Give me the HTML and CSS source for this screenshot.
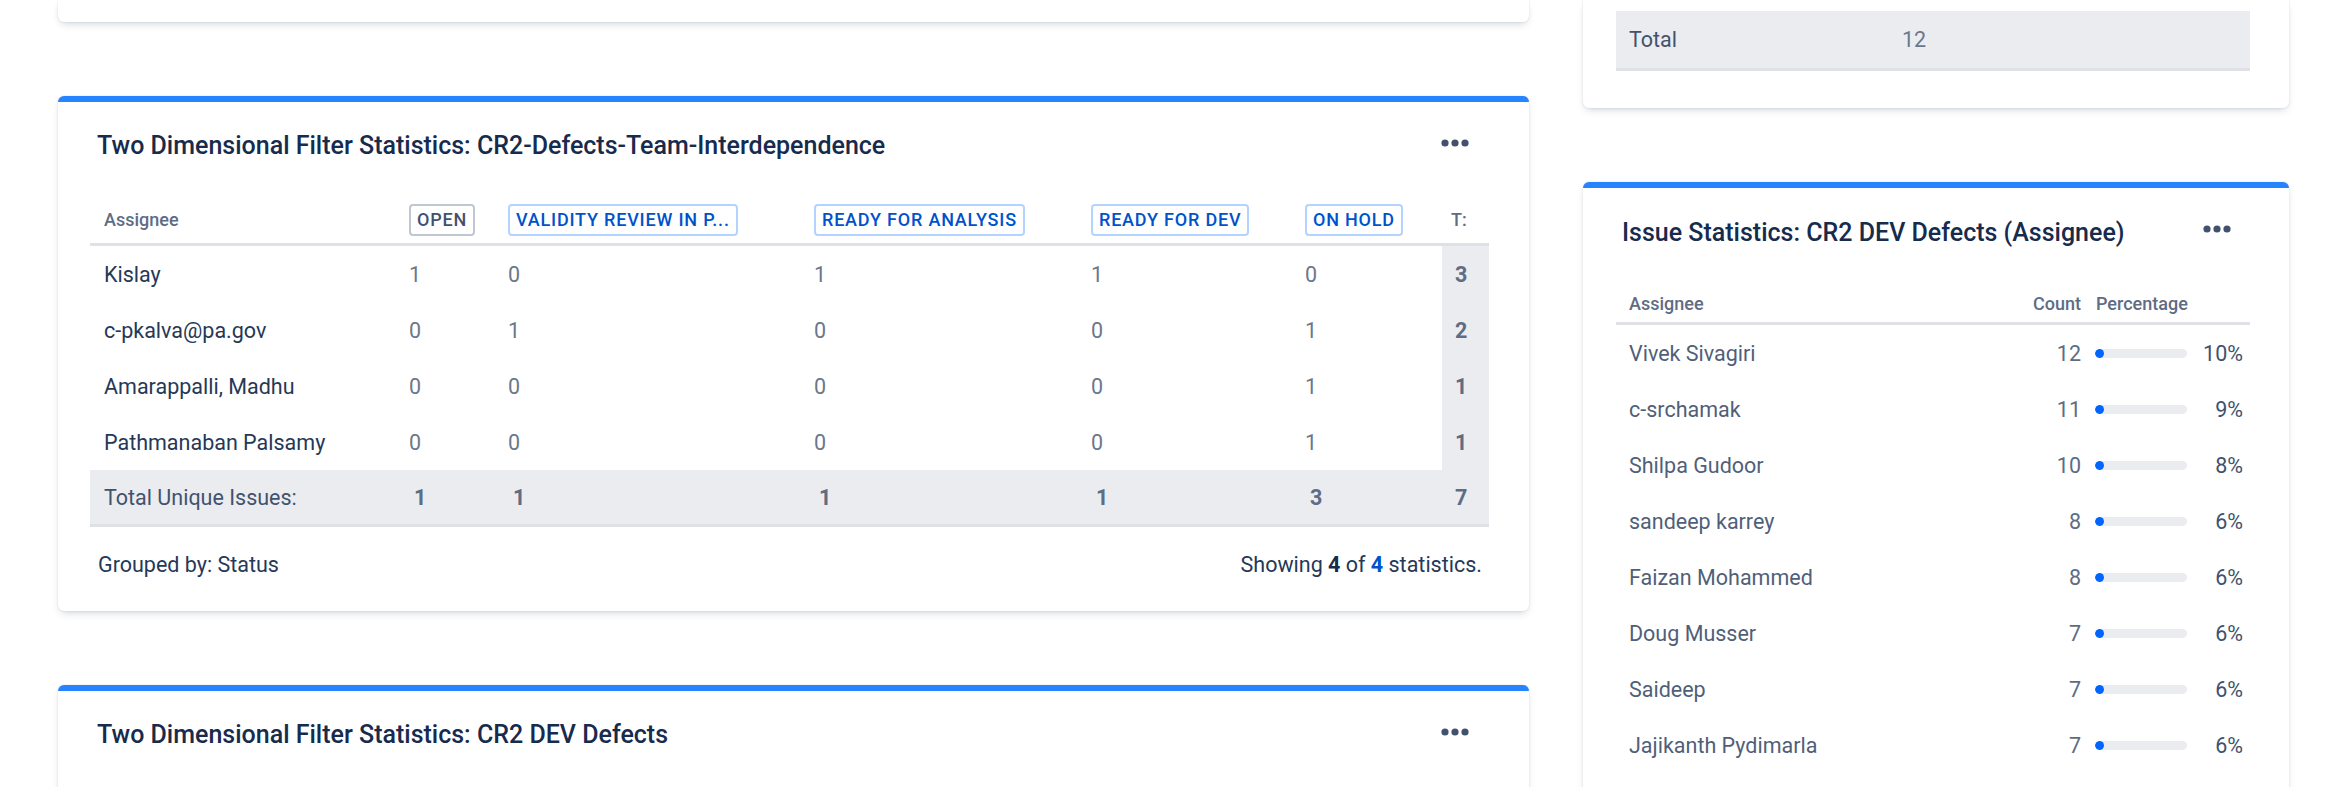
FILE: index.html
```html
<!DOCTYPE html>
<html lang="en">
<head>
<meta charset="utf-8">
<title>Dashboard</title>
<link rel="stylesheet" href="styles.css">
</head>
<body>
<div class="page">
  <div class="col col-left">
    <div class="card stub-left"></div>

    <section class="card gadget">
      <div class="gadget-head">
        <h2 class="gadget-title">Two Dimensional Filter Statistics: CR2-Defects-Team-Interdependence</h2>
        <span class="more"><svg width="28" height="8" viewBox="0 0 28 8"><circle cx="4" cy="4" r="3.6"/><circle cx="14" cy="4" r="3.6"/><circle cx="24" cy="4" r="3.6"/></svg></span>
      </div>
      <table class="two-d">
        <colgroup>
          <col class="c-name"><col class="c-open"><col class="c-valid"><col class="c-anal"><col class="c-dev"><col class="c-hold"><col class="c-tot">
        </colgroup>
        <thead>
          <tr>
            <th class="name">Assignee</th>
            <th><span class="loz loz-grey">OPEN</span></th>
            <th><span class="loz loz-blue">VALIDITY REVIEW IN P...</span></th>
            <th><span class="loz loz-blue">READY FOR ANALYSIS</span></th>
            <th><span class="loz loz-blue">READY FOR DEV</span></th>
            <th><span class="loz loz-blue">ON HOLD</span></th>
            <th class="tot-h">T:</th>
          </tr>
        </thead>
        <tbody>
          <tr><td class="name">Kislay</td><td>1</td><td>0</td><td>1</td><td>1</td><td>0</td><td class="tot">3</td></tr>
          <tr><td class="name">c-pkalva@pa.gov</td><td>0</td><td>1</td><td>0</td><td>0</td><td>1</td><td class="tot">2</td></tr>
          <tr><td class="name">Amarappalli, Madhu</td><td>0</td><td>0</td><td>0</td><td>0</td><td>1</td><td class="tot">1</td></tr>
          <tr><td class="name">Pathmanaban Palsamy</td><td>0</td><td>0</td><td>0</td><td>0</td><td>1</td><td class="tot">1</td></tr>
          <tr class="total-row"><td class="name">Total Unique Issues:</td><td>1</td><td>1</td><td>1</td><td>1</td><td>3</td><td class="tot">7</td></tr>
        </tbody>
      </table>
      <div class="gadget-foot">
        <span>Grouped by: Status</span>
        <span>Showing <b>4</b> of <b class="link">4</b> statistics.</span>
      </div>
    </section>

    <section class="card gadget gadget-tall">
      <div class="gadget-head">
        <h2 class="gadget-title">Two Dimensional Filter Statistics: CR2 DEV Defects</h2>
        <span class="more"><svg width="28" height="8" viewBox="0 0 28 8"><circle cx="4" cy="4" r="3.6"/><circle cx="14" cy="4" r="3.6"/><circle cx="24" cy="4" r="3.6"/></svg></span>
      </div>
    </section>
  </div>

  <div class="col col-right">
    <div class="card stub-right">
      <div class="total-line"><span class="tl-label">Total</span><span class="tl-val">12</span></div>
    </div>

    <section class="card gadget gadget-right">
      <div class="gadget-head">
        <h2 class="gadget-title">Issue Statistics: CR2 DEV Defects (Assignee)</h2>
        <span class="more"><svg width="28" height="8" viewBox="0 0 28 8"><circle cx="4" cy="4" r="3.6"/><circle cx="14" cy="4" r="3.6"/><circle cx="24" cy="4" r="3.6"/></svg></span>
      </div>
      <table class="stats">
        <colgroup><col class="s-name"><col class="s-count"><col class="s-pct"></colgroup>
        <thead>
          <tr><th class="name">Assignee</th><th class="count">Count</th><th class="pct-h">Percentage</th></tr>
        </thead>
        <tbody>
          <tr><td class="name">Vivek Sivagiri</td><td class="count">12</td><td><div class="pct"><span class="bar"><span class="fill" style="width:10%"></span></span><span class="pv">10%</span></div></td></tr>
          <tr><td class="name">c-srchamak</td><td class="count">11</td><td><div class="pct"><span class="bar"><span class="fill" style="width:9%"></span></span><span class="pv">9%</span></div></td></tr>
          <tr><td class="name">Shilpa Gudoor</td><td class="count">10</td><td><div class="pct"><span class="bar"><span class="fill" style="width:8%"></span></span><span class="pv">8%</span></div></td></tr>
          <tr><td class="name">sandeep karrey</td><td class="count">8</td><td><div class="pct"><span class="bar"><span class="fill" style="width:6%"></span></span><span class="pv">6%</span></div></td></tr>
          <tr><td class="name">Faizan Mohammed</td><td class="count">8</td><td><div class="pct"><span class="bar"><span class="fill" style="width:6%"></span></span><span class="pv">6%</span></div></td></tr>
          <tr><td class="name">Doug Musser</td><td class="count">7</td><td><div class="pct"><span class="bar"><span class="fill" style="width:6%"></span></span><span class="pv">6%</span></div></td></tr>
          <tr><td class="name">Saideep</td><td class="count">7</td><td><div class="pct"><span class="bar"><span class="fill" style="width:6%"></span></span><span class="pv">6%</span></div></td></tr>
          <tr><td class="name">Jajikanth Pydimarla</td><td class="count">7</td><td><div class="pct"><span class="bar"><span class="fill" style="width:6%"></span></span><span class="pv">6%</span></div></td></tr>
        </tbody>
      </table>
    </section>
  </div>
</div>
</body>
</html>
```

FILE: styles.css
```css
html, body {
  margin: 0;
  padding: 0;
  background: #ffffff;
  height: 787px;
  overflow: hidden;
}
body {
  font-family: Roboto, "Noto Sans", "Liberation Sans", sans-serif;
  color: #172b4d;
  font-size: 21.5px;
}
.page {
  display: flex;
  gap: 54px;
  padding-left: 58px;
}
.col {
  display: flex;
  flex-direction: column;
  gap: 74px;
}
.col-left { width: 1471px; }
.col-right { width: 706px; }

.card {
  background: #fff;
  border-radius: 6px;
  box-shadow: 0 4px 9px -3px rgba(9, 30, 66, 0.22), 0 0 2px rgba(9, 30, 66, 0.14);
}
.stub-left {
  height: 22px;
  border-radius: 0 0 6px 6px;
}
.stub-right {
  border-radius: 0 0 6px 6px;
  padding: 11px 39px 37px 33px;
}
.total-line {
  display: flex;
  align-items: center;
  height: 57px;
  background: #ebecf0;
  border-bottom: 3px solid #dfe1e6;
  color: #42526e;
}
.tl-label { width: 273px; padding-left: 13px; }
.tl-val { color: #6b778c; }

.gadget {
  border-top: 6px solid #2684ff;
  padding: 28px 40px 0 32px;
}
.gadget-tall { height: 300px; }
.gadget-head {
  display: flex;
  justify-content: space-between;
  align-items: flex-start;
  padding-left: 7px;
  padding-right: 20px;
  margin-bottom: 34px;
}
.gadget-title {
  margin: 0;
  font-size: 25px;
  line-height: 32px;
  font-weight: 500;
  color: #172b4d;
}
.more {
  display: flex;
  margin-top: 9px;
}
.more svg { fill: #42526e; }

/* two dimensional table */
table {
  border-collapse: separate;
  border-spacing: 0;
  table-layout: fixed;
  width: 100%;
}
.two-d .c-name { width: 319px; }
.two-d .c-open { width: 99px; }
.two-d .c-valid { width: 306px; }
.two-d .c-anal { width: 277px; }
.two-d .c-dev { width: 214px; }
.two-d .c-hold { width: 137px; }
.two-d .c-tot { width: 47px; }

th, td {
  box-sizing: border-box;
  padding: 0;
  text-align: left;
  vertical-align: middle;
  white-space: nowrap;
}
.two-d th {
  height: 50px;
  border-bottom: 3px solid #dfe1e6;
  font-size: 18px;
  font-weight: 500;
  color: #5e6c84;
}
.two-d .name { padding-left: 14px; }
.two-d td {
  height: 56px;
  color: #6b778c;
}
.two-d td.name { color: #253858; }
.two-d .tot-h { padding-left: 9px; font-weight: 500; }
.two-d td.tot {
  background: #ebecf0;
  padding-left: 13px;
  font-weight: 700;
  color: #5e6c84;
}
.two-d .total-row td {
  height: 57px;
  background: #ebecf0;
  border-bottom: 3px solid #dfe1e6;
  font-weight: 700;
  color: #5e6c84;
  padding-left: 5px;
}
.two-d .total-row td.name {
  font-weight: 400;
  color: #42526e;
  padding-left: 14px;
}
.two-d .total-row td.tot { padding-left: 13px; }

.loz {
  display: inline-block;
  box-sizing: border-box;
  height: 32px;
  line-height: 28px;
  padding: 0 6px;
  border: 2px solid #c1c7d0;
  border-radius: 4px;
  font-size: 18px;
  font-weight: 500;
  letter-spacing: 0.8px;
  color: #42526e;
  vertical-align: middle;
}
.loz-blue {
  border-color: #b3d4ff;
  color: #0052cc;
}

.gadget-foot {
  display: flex;
  justify-content: space-between;
  padding: 23px 7px 31px 8px;
  line-height: 30px;
  color: #253858;
}
.gadget-foot b { font-weight: 700; color: #172b4d; }
.gadget-foot b.link { color: #0052cc; }

/* issue statistics */
.gadget-right {
  padding: 29px 39px 0 33px;
  height: 760px;
}
.gadget-right .gadget-head {
  padding-left: 6px;
  padding-right: 19px;
  margin-bottom: 36px;
}
.gadget-right .more { margin-top: 8px; }
.stats .s-count { width: 80px; }
.stats .s-pct { width: 169px; }
.stats th {
  height: 40px;
  border-bottom: 3px solid #dfe1e6;
  font-size: 18px;
  font-weight: 500;
  color: #5e6c84;
}
.stats .name { padding-left: 13px; }
.stats .count { text-align: right; }
.stats .pct-h { padding-left: 15px; }
.stats td {
  height: 56px;
  color: #505f79;
}
.stats td.count { color: #5e6c84; }
.pct {
  display: flex;
  align-items: center;
  padding-left: 14px;
  padding-right: 7px;
}
.bar {
  display: block;
  width: 92px;
  height: 9px;
  border-radius: 5px;
  background: #ebecf0;
  overflow: hidden;
}
.fill {
  display: block;
  height: 100%;
  min-width: 9px;
  border-radius: 5px;
  background: #0065ff;
}
.pv {
  flex: 1;
  text-align: right;
  color: #42526e;
}
```
